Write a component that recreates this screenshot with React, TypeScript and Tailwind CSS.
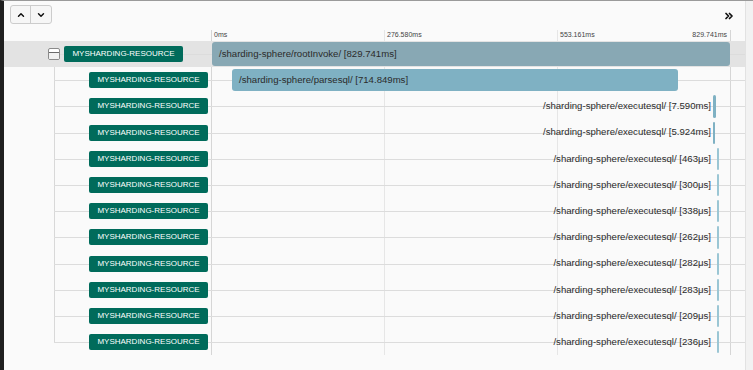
import React from "react";
import { ChevronDown, ChevronUp, ChevronsRight } from "lucide-react";

interface Span {
  name: string;
  label: string;
  start: number; // ms
  dur: number; // ms
}

const TOTAL = 829.741;
const TRACK = 519; // px width of the timeline
const PX = TRACK / TOTAL;

const spans: Span[] = [
  { name: "/sharding-sphere/rootInvoke/", label: "829.741ms", start: 0, dur: 829.741 },
  { name: "/sharding-sphere/parsesql/", label: "714.849ms", start: 32, dur: 714.849 },
  { name: "/sharding-sphere/executesql/", label: "7.590ms", start: 801, dur: 7.59 },
  { name: "/sharding-sphere/executesql/", label: "5.924ms", start: 801, dur: 5.924 },
  { name: "/sharding-sphere/executesql/", label: "463μs", start: 807.5, dur: 0.463 },
  { name: "/sharding-sphere/executesql/", label: "300μs", start: 807.5, dur: 0.3 },
  { name: "/sharding-sphere/executesql/", label: "338μs", start: 807.5, dur: 0.338 },
  { name: "/sharding-sphere/executesql/", label: "262μs", start: 807.5, dur: 0.262 },
  { name: "/sharding-sphere/executesql/", label: "282μs", start: 807.5, dur: 0.282 },
  { name: "/sharding-sphere/executesql/", label: "283μs", start: 807.5, dur: 0.283 },
  { name: "/sharding-sphere/executesql/", label: "209μs", start: 807.5, dur: 0.209 },
  { name: "/sharding-sphere/executesql/", label: "236μs", start: 807.5, dur: 0.236 },
];

const ticks = ["0ms", "276.580ms", "553.161ms"];

const Badge = () => (
  <div className="relative z-10 flex h-[16px] w-[119px] items-center justify-center rounded-[2px] bg-[#006b5b] text-[8px] text-white">
    MYSHARDING-RESOURCE
  </div>
);

const SpanRow = ({ span, index }: { span: Span; index: number }) => {
  const root = index === 0;
  const left = 1 + span.start * PX;
  const width = Math.max(span.dur * PX - 1.5, 1.5);
  const wide = width > 100;

  return (
    <div className={`relative flex h-[26.2px] items-center ${root ? "bg-[#e3e3e3]" : ""}`}>
      <div className={`absolute right-0 top-[13px] h-px bg-[#dcdcdc] ${root ? "left-[56px]" : "left-[50px]"}`} />
      <div className={`flex w-[207px] shrink-0 items-center ${root ? "pl-[44px]" : "pl-[85px]"}`}>
        {root && (
          <div className="relative z-10 mr-[4px] flex h-[12px] w-[12px] flex-col overflow-hidden rounded-[2px] border border-[#8a8a8a] bg-white">
            <div className="h-[4px] border-b border-[#6a6a6a]" />
            <div className="flex-1 bg-[#f0f0f0]" />
          </div>
        )}
        <Badge />
      </div>
      <div className="relative h-full w-[519px] shrink-0">
        <div
          className={`absolute z-10 flex items-center rounded-[3px] ${
            root ? "bottom-[1px] top-[1px] bg-[#88a8b4]" : "bottom-[2px] top-[2px]"
          } ${!root && wide ? "bg-[#7fb1c3]" : ""} ${!wide ? (width > 2 ? "bg-[#7fb1c3]" : "bg-[#9bc6d4]") : ""}`}
          style={{ left, width }}
        >
          {wide && (
            <span className="whitespace-nowrap pl-[7px] text-[9.6px] text-[#2b2b2b]">
              {span.name} [{span.label}]
            </span>
          )}
        </div>
        {!wide && (
          <span className="absolute right-[19px] top-0 z-10 flex h-full items-center whitespace-nowrap text-[9.6px] text-[#2b2b2b]">
            {span.name} [{span.label}]
          </span>
        )}
      </div>
    </div>
  );
};

export default function App() {
  return (
    <div
      className="flex h-[370px] w-[753px] overflow-hidden border-l-4 border-t border-l-[#1f1f1f] border-t-[#9a9a9a] bg-[#fafafa]"
      style={{ fontFamily: '"Liberation Sans", Arial, sans-serif' }}
    >
      <div className="flex w-[741px] shrink-0 flex-col">
        <div className="flex h-[28px] items-start justify-between pl-[6px] pr-[10px] pt-[4px]">
          <div className="flex h-[19px] overflow-hidden rounded-[3px] border border-[#cccccc] bg-[#f6f6f6]">
            <div className="flex w-[20px] items-center justify-center border-r border-[#cccccc]">
              <ChevronUp size={10} strokeWidth={3.5} color="#111" />
            </div>
            <div className="flex w-[20px] items-center justify-center">
              <ChevronDown size={10} strokeWidth={3.5} color="#111" />
            </div>
          </div>
          <ChevronsRight size={12} strokeWidth={3.5} color="#111" className="mt-[5px]" />
        </div>

        <div className="relative">
          <div className="absolute bottom-0 left-[207px] top-[1px] w-px bg-[#d6d6d6]" />
          <div className="absolute bottom-0 left-[380px] top-[1px] w-px bg-[#e6e6e6]" />
          <div className="absolute bottom-0 left-[553px] top-[1px] w-px bg-[#e6e6e6]" />
          <div className="absolute bottom-0 left-[726px] top-[1px] w-px bg-[#d6d6d6]" />

          <div className="flex h-[12px] items-center">
            <div className="w-[207px] shrink-0" />
            <div className="flex w-[519px] shrink-0 text-[7px] text-[#444]">
              {ticks.map((t, i) => (
                <div key={t} className={`flex w-[173px] pl-[3px] ${i === 2 ? "justify-between pr-[3px]" : ""}`}>
                  <span>{t}</span>
                  {i === 2 && <span>829.741ms</span>}
                </div>
              ))}
            </div>
          </div>

          <div className="relative">
            <div className="absolute left-[50px] top-[20px] h-[281px] w-px bg-[#d8d8d8]" />
            {spans.map((s, i) => (
              <SpanRow key={i} span={s} index={i} />
            ))}
          </div>
        </div>
      </div>
      <div className="flex-1 border-l border-[#e2e2e2] bg-[#f2f2f2]" />
    </div>
  );
}
